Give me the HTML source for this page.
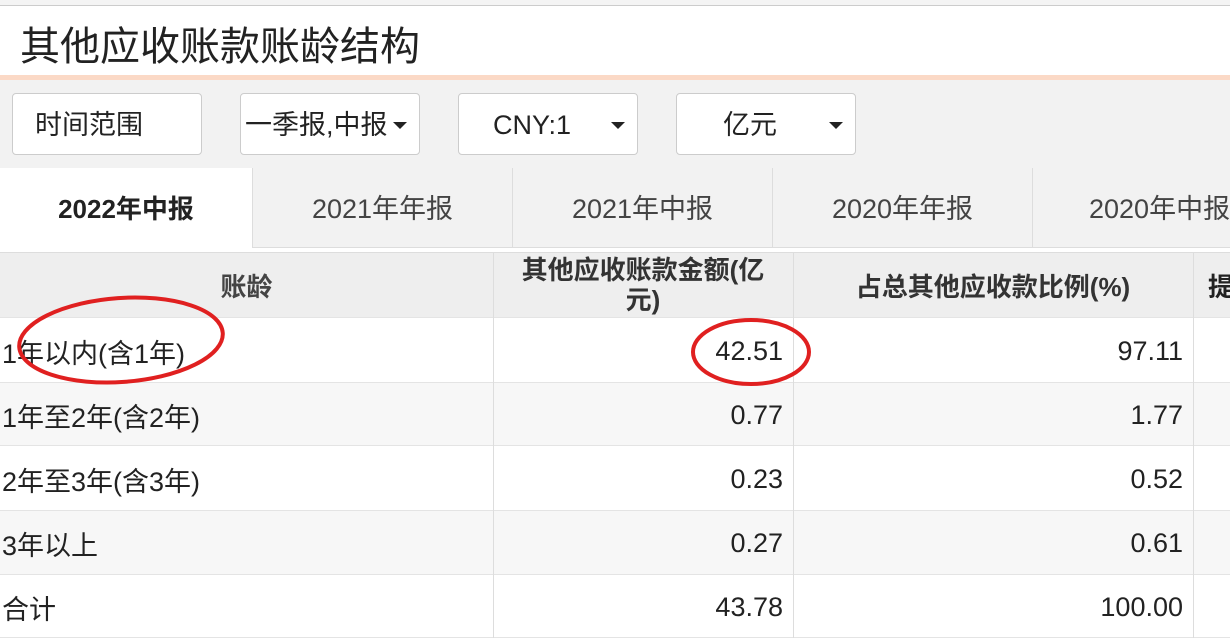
<!DOCTYPE html>
<html><head><meta charset="utf-8"><style>
*{margin:0;padding:0;box-sizing:border-box}
body{width:1230px;height:638px;overflow:hidden;background:#fff;font-family:"Liberation Sans","Noto Sans CJK SC",sans-serif;color:#333;position:relative}
.abs{position:absolute}
.title{left:20px;top:14px;font-size:40px;color:#222;}
.btn{position:absolute;top:93px;height:62px;border:1px solid #ccc;border-radius:4px;background:#fff;font-size:27px;line-height:62px;color:#222}
.tri{position:absolute;right:12px;top:28px;width:0;height:0;border-left:7px solid transparent;border-right:7px solid transparent;border-top:7px solid #222}
.tab{position:absolute;top:168px;height:80px;font-size:27px;line-height:82px;text-align:center;color:#444;background:#f2f2f2;border-left:1px solid #ddd;border-bottom:1px solid #ddd;white-space:nowrap}
.row{position:absolute;left:0;width:1230px;font-size:27px;color:#222;border-bottom:1px solid #e4e4e4}
.c{position:absolute;top:1px;height:100%;display:flex;align-items:center;white-space:nowrap}
.vl{position:absolute;top:252px;bottom:0;width:1px;background:#ddd}
</style></head><body>
<div class="abs" style="left:0;top:0;width:1230px;height:6px;background:#f4f4f4;border-bottom:1px solid #ccc"></div>
<div class="abs title">其他应收账款账龄结构</div>
<div class="abs" style="left:0;top:75px;width:1230px;height:5px;background:#fbd9c6"></div>
<div class="abs" style="left:0;top:80px;width:1230px;height:88px;background:#f2f2f2"></div>
<div class="btn" style="left:12px;width:190px;padding-left:22px">时间范围</div>
<div class="btn" style="left:240px;width:180px;overflow:hidden;white-space:nowrap"><span style="position:absolute;left:4px;width:142px;overflow:hidden;display:block">一季报,中报</span><div class="tri"></div></div>
<div class="btn" style="left:458px;width:180px;padding-left:34px">CNY:1<div class="tri"></div></div>
<div class="btn" style="left:676px;width:180px;padding-left:46px">亿元<div class="tri"></div></div>
<div class="tab" style="left:0;width:252px;background:#fff;border:none;font-weight:bold;color:#222;font-size:26px">2022年中报</div>
<div class="tab" style="left:252px;width:260px">2021年年报</div>
<div class="tab" style="left:512px;width:260px">2021年中报</div>
<div class="tab" style="left:772px;width:260px">2020年年报</div>
<div class="tab" style="left:1032px;width:260px;text-align:left;padding-left:56px">2020年中报</div>
<div class="row" style="top:252px;height:66px;background:#eee;font-weight:bold;border-top:1px solid #ddd;font-size:26px">
<div class="c" style="top:0;left:0;width:493px;justify-content:center;color:#444">账龄</div>
<div class="c" style="top:0;left:493px;width:300px;justify-content:center;text-align:center;line-height:30px;color:#333">其他应收账款金额(亿<br>元)</div>
<div class="c" style="top:0;left:793px;width:400px;justify-content:center;color:#333">占总其他应收款比例(%)</div>
<div class="c" style="top:0;left:1208px">提</div></div>
<div class="row" style="top:318px;height:65px;background:#fff"><div class="c" style="left:2px">1年以内(含1年)</div><div class="c" style="right:447px">42.51</div><div class="c" style="right:47px">97.11</div></div>
<div class="row" style="top:383px;height:63px;background:#f7f7f7"><div class="c" style="left:2px">1年至2年(含2年)</div><div class="c" style="right:447px">0.77</div><div class="c" style="right:47px">1.77</div></div>
<div class="row" style="top:446px;height:65px;background:#fff"><div class="c" style="left:2px">2年至3年(含3年)</div><div class="c" style="right:447px">0.23</div><div class="c" style="right:47px">0.52</div></div>
<div class="row" style="top:511px;height:64px;background:#f7f7f7"><div class="c" style="left:2px">3年以上</div><div class="c" style="right:447px">0.27</div><div class="c" style="right:47px">0.61</div></div>
<div class="row" style="top:575px;height:63px;background:#fff"><div class="c" style="left:2px">合计</div><div class="c" style="right:447px">43.78</div><div class="c" style="right:47px">100.00</div></div>
<div class="vl" style="left:493px"></div><div class="vl" style="left:793px"></div><div class="vl" style="left:1193px"></div>
<svg class="abs" style="left:0;top:0" width="1230" height="638">
<ellipse cx="121" cy="340" rx="102" ry="42" fill="none" stroke="#e02020" stroke-width="4" transform="rotate(-4 121 340)"/>
<ellipse cx="751" cy="352" rx="58" ry="32" fill="none" stroke="#e02020" stroke-width="4"/>
</svg>
</body></html>
